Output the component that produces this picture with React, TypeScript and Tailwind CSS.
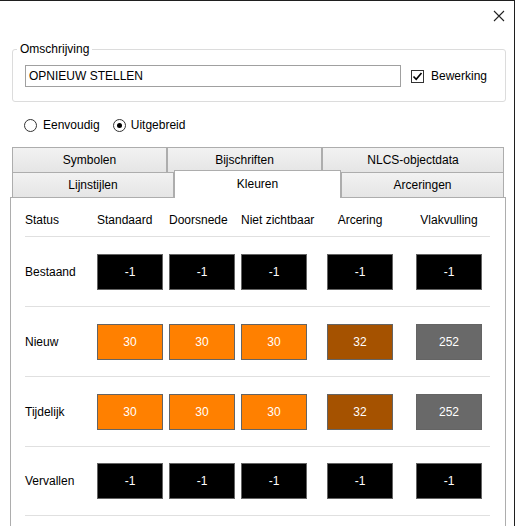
import React from "react";

type Cell = { value: string; color: string };

const BLACK = "bg-[#000000]";
const ORANGE = "bg-[#ff8000]";
const BROWN = "bg-[#a55200]";
const GREY = "bg-[#696969]";

const rows: { label: string; cells: Cell[] }[] = [
  {
    label: "Bestaand",
    cells: [
      { value: "-1", color: BLACK },
      { value: "-1", color: BLACK },
      { value: "-1", color: BLACK },
      { value: "-1", color: BLACK },
      { value: "-1", color: BLACK },
    ],
  },
  {
    label: "Nieuw",
    cells: [
      { value: "30", color: ORANGE },
      { value: "30", color: ORANGE },
      { value: "30", color: ORANGE },
      { value: "32", color: BROWN },
      { value: "252", color: GREY },
    ],
  },
  {
    label: "Tijdelijk",
    cells: [
      { value: "30", color: ORANGE },
      { value: "30", color: ORANGE },
      { value: "30", color: ORANGE },
      { value: "32", color: BROWN },
      { value: "252", color: GREY },
    ],
  },
  {
    label: "Vervallen",
    cells: [
      { value: "-1", color: BLACK },
      { value: "-1", color: BLACK },
      { value: "-1", color: BLACK },
      { value: "-1", color: BLACK },
      { value: "-1", color: BLACK },
    ],
  },
];

const cols = "grid grid-cols-[72px_72px_72px_86px_89px_1fr]";

const tabBase =
  "flex items-center justify-center border-t border-x border-[#adadad] bg-gradient-to-b from-[#f2f2f2] to-[#e5e5e5]";

const Radio = ({ checked }: { checked?: boolean }) => (
  <span className="flex h-[13px] w-[13px] items-center justify-center rounded-full border border-[#333333] bg-white">
    {checked && <span className="h-[5px] w-[5px] rounded-full bg-black" />}
  </span>
);

const ColorBox = ({ cell }: { cell: Cell }) => (
  <div
    className={`flex h-[36px] w-[66px] items-center justify-center border border-[#646464] text-white ${cell.color}`}
  >
    {cell.value}
  </div>
);

export default function App() {
  return (
    <div className="h-[526px] w-[515px] overflow-hidden border-t border-r border-[#1f1f1f] bg-white font-['Liberation_Sans',Arial,sans-serif] text-[12px] text-black">
      {/* title bar */}
      <div className="flex h-[30px] items-center justify-end pr-[9px]">
        <svg width="12" height="12" viewBox="0 0 12 12">
          <path d="M1 1 L11 11 M11 1 L1 11" stroke="#222" strokeWidth="1.1" fill="none" />
        </svg>
      </div>

      {/* Omschrijving */}
      <div className="relative mx-[12px] mt-[18px] w-[494px] rounded-[3px] border border-[#dcdcdc] pt-[15px] pb-[14px] pl-[12px]">
        <span className="absolute -top-[8px] left-[4px] bg-white px-[3px] leading-[14px]">
          Omschrijving
        </span>
        <div className="flex items-center">
          <div className="flex h-[22px] w-[376px] items-center border border-[#a0a0a0] pl-[3px]">
            OPNIEUW STELLEN
          </div>
          <span className="ml-[10px] flex h-[13px] w-[13px] items-center justify-center border border-[#333333] bg-white">
            <svg width="11" height="11" viewBox="0 0 11 11">
              <path d="M1.5 5.5 L4.2 8.3 L9.5 2" stroke="#000" strokeWidth="1.6" fill="none" />
            </svg>
          </span>
          <span className="ml-[7px]">Bewerking</span>
        </div>
      </div>

      {/* radio */}
      <div className="mt-[15px] flex h-[16px] items-center pl-[24px]">
        <Radio />
        <span className="ml-[6px]">Eenvoudig</span>
        <span className="ml-[13px]">
          <Radio checked />
        </span>
        <span className="ml-[5px]">Uitgebreid</span>
      </div>

      {/* tabs */}
      <div className="mt-[14px] ml-[10px] w-[496px]">
        <div className="flex h-[25px] px-[2px]">
          <div className={`${tabBase} w-[155px]`}>Symbolen</div>
          <div className={`${tabBase} w-[155px]`}>Bijschriften</div>
          <div className={`${tabBase} w-[182px]`}>NLCS-objectdata</div>
        </div>
        <div className="flex h-[25px] items-end px-[2px]">
          <div className={`${tabBase} h-[25px] w-[162px]`}>Lijnstijlen</div>
          <div className="relative z-10 -mb-[1px] flex h-[28px] w-[167px] items-center justify-center border-t border-x border-[#adadad] bg-white pb-[1px]">
            Kleuren
          </div>
          <div className={`${tabBase} h-[25px] w-[163px]`}>Arceringen</div>
        </div>

        {/* panel */}
        <div className="h-[340px] border border-[#adadad] pt-[6px] pl-[14px]">
          <div className="w-[465px]">
            <div className={`${cols} h-[32px] items-center`}>
              <span>Status</span>
              <span>Standaard</span>
              <span>Doorsnede</span>
              <span className="whitespace-nowrap">Niet zichtbaar</span>
              <span className="flex w-[66px] justify-center">Arcering</span>
              <span className="flex w-[66px] justify-center">Vlakvulling</span>
            </div>
            {rows.map((row, i) => (
              <div
                key={row.label}
                className={`${cols} h-[70px] items-center border-t border-[#e0e0e0] ${
                  i === rows.length - 1 ? "border-b" : ""
                }`}
              >
                <span>{row.label}</span>
                {row.cells.map((cell, j) => (
                  <ColorBox key={j} cell={cell} />
                ))}
              </div>
            ))}
          </div>
        </div>
      </div>
    </div>
  );
}
